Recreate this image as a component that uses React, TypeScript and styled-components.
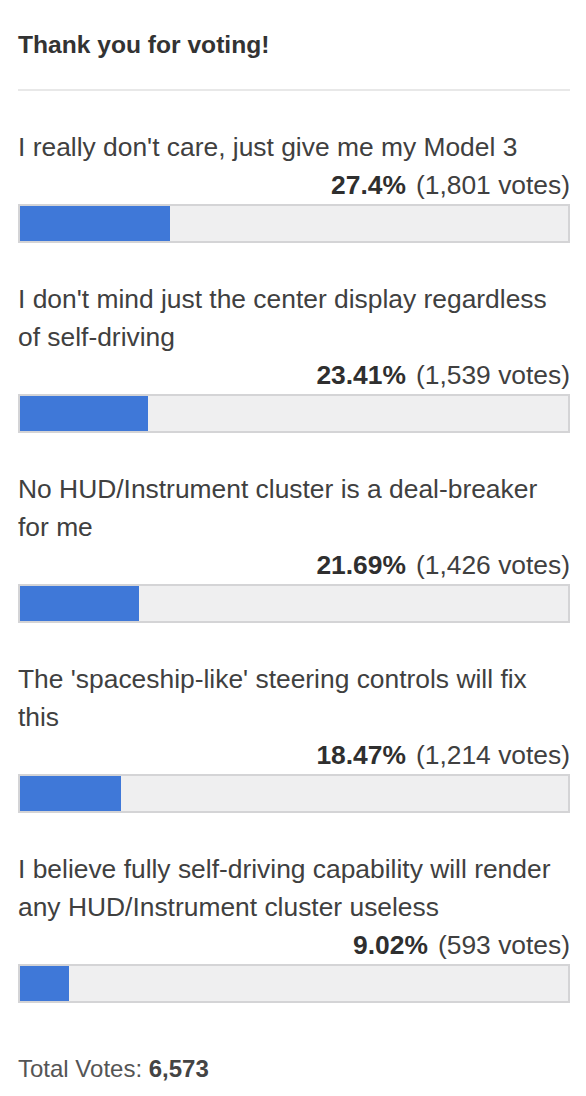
import React from "react";
import styled, { createGlobalStyle } from "styled-components";

interface IOption {
    label: string;
    percent: string;
    votes: string;
    share: number;
}

const options: IOption[] = [
    { label: "I really don't care, just give me my Model 3", percent: "27.4%", votes: "1,801", share: 27.4 },
    { label: "I don't mind just the center display regardless of self-driving", percent: "23.41%", votes: "1,539", share: 23.41 },
    { label: "No HUD/Instrument cluster is a deal-breaker for me", percent: "21.69%", votes: "1,426", share: 21.69 },
    { label: "The 'spaceship-like' steering controls will fix this", percent: "18.47%", votes: "1,214", share: 18.47 },
    { label: "I believe fully self-driving capability will render any HUD/Instrument cluster useless", percent: "9.02%", votes: "593", share: 9.02 },
];

const App = () => {
    return (
        <>
            <GlobalStyle />
            <Poll>
                <Title>Thank you for voting!</Title>
                <Divider />
                <OptionList>
                    {options.map((opt) => (
                        <Option key={opt.label}>
                            <Label>{opt.label}</Label>
                            <Result>
                                <Percent>{opt.percent}</Percent>
                                <Count>({opt.votes} votes)</Count>
                            </Result>
                            <Track>
                                <Fill style={{ width: `${opt.share}%` }} />
                            </Track>
                        </Option>
                    ))}
                </OptionList>
                <Total>
                    Total Votes: <b>6,573</b>
                </Total>
            </Poll>
        </>
    );
};

export default App;

const GlobalStyle = createGlobalStyle`
    body {
        margin: 0;
        background: #ffffff;
        font-family: "Liberation Sans", Arial, sans-serif;
        color: #333333;
    }
`;

const Poll = styled.div`
    width: 586px;
    box-sizing: border-box;
    padding: 29px 16px 0 18px;
`;

const Title = styled.h2`
    margin: 0;
    font-size: 24.6px;
    line-height: 32px;
    font-weight: bold;
    color: #333333;
`;

const Divider = styled.hr`
    margin: 28px 0 0;
    border: none;
    border-top: 2px solid #e8e8e8;
`;

const OptionList = styled.div`
    display: flex;
    flex-direction: column;
    gap: 37px;
    margin-top: 37px;
`;

const Option = styled.div`
    display: flex;
    flex-direction: column;
`;

const Label = styled.div`
    font-size: 26.4px;
    line-height: 38px;
    color: #404040;
`;

const Result = styled.div`
    display: flex;
    justify-content: flex-end;
    gap: 10px;
    font-size: 26.4px;
    line-height: 38px;
    color: #404040;
`;

const Percent = styled.span`
    font-weight: bold;
    color: #2f2f2f;
`;

const Count = styled.span``;

const Track = styled.div`
    flex: none;
    box-sizing: border-box;
    height: 39px;
    background: #efeff0;
    border: 2px solid #d4d4d6;
    display: flex;
`;

const Fill = styled.div`
    background: #3f78d8;
`;

const Total = styled.div`
    margin-top: 51px;
    font-size: 24px;
    line-height: 30px;
    color: #555555;
    b {
        color: #444444;
    }
`;
